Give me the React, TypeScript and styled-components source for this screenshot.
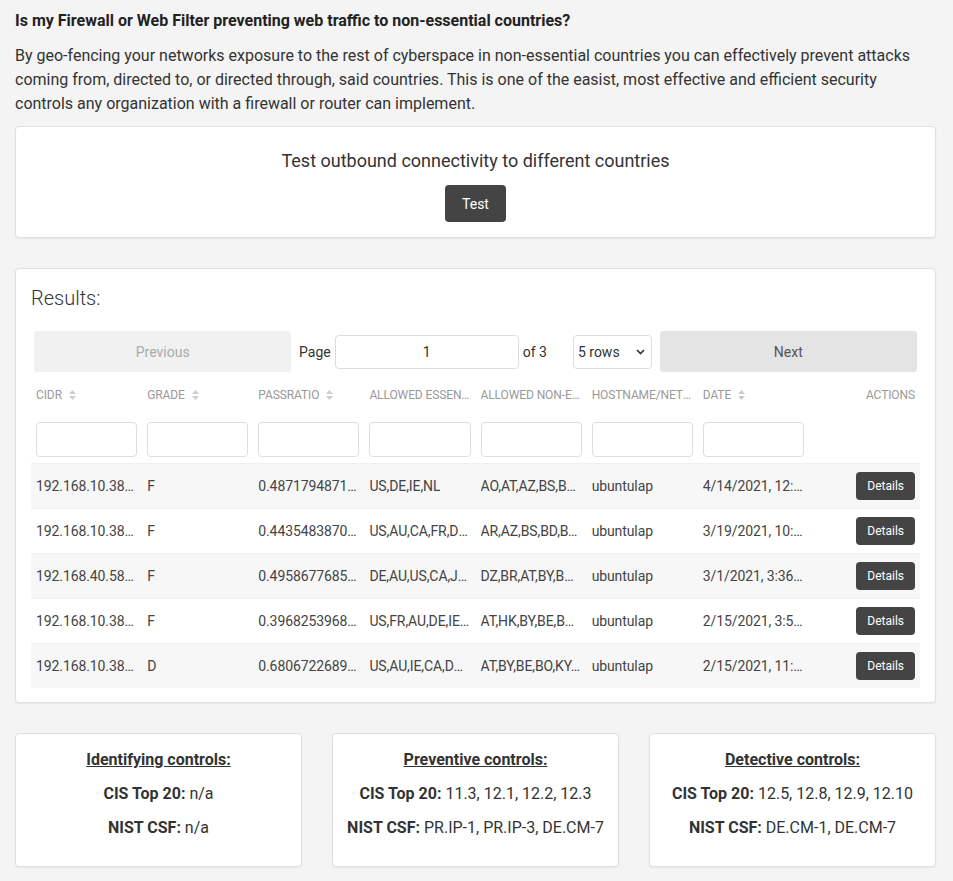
import React from 'react'
import styled, { createGlobalStyle } from 'styled-components'

const GlobalStyle = createGlobalStyle`
  body {
    margin: 0;
    background: #f4f4f4;
    font-family: Roboto, "Liberation Sans", Arial, sans-serif;
    color: #333;
  }
  * { box-sizing: border-box; }
`

const Page = styled.div`
  padding: 9px 17px 17px 15px;
`

const Question = styled.div`
  font-size: 16px;
  line-height: 24px;
  font-weight: 700;
  color: #222;
`

const Intro = styled.p`
  margin: 11px 0 10px;
  font-size: 16px;
  line-height: 24px;
  color: #333;
`

const Card = styled.div`
  background: #fff;
  border: 1px solid #e0e0e0;
  border-radius: 4px;
  box-shadow: 0 1px 2px rgba(0, 0, 0, 0.06);
`

const TestCard = styled(Card)`
  padding: 20px 15px 15px;
  text-align: center;
`

const TestHeading = styled.div`
  font-size: 18px;
  line-height: 27px;
  color: #333;
  margin-bottom: 11px;
`

const DarkButton = styled.button<{ $small?: boolean }>`
  background: #444;
  color: #fff;
  border: none;
  border-radius: 4px;
  font-family: inherit;
  font-size: ${p => (p.$small ? '12px' : '14px')};
  height: ${p => (p.$small ? '28px' : '37px')};
  padding: ${p => (p.$small ? '0 11px' : '0 17px')};
  cursor: pointer;
`

const ResultsCard = styled(Card)`
  margin-top: 30px;
  padding: 15px 15px 14px;
`

const ResultsHeading = styled.div`
  font-size: 20px;
  line-height: 28px;
  font-weight: 300;
  color: #333;
  margin-bottom: 16px;
`

const Pagination = styled.div`
  display: flex;
  align-items: center;
  padding: 3px;
`

const PageButton = styled.button<{ $disabled?: boolean }>`
  flex: 1 1 0;
  min-width: 0;
  height: 41px;
  border: none;
  border-radius: 3px;
  font-family: inherit;
  font-size: 14px;
  background: ${p => (p.$disabled ? '#f1f1f1' : '#e4e4e4')};
  color: ${p => (p.$disabled ? '#aaa' : '#555')};
`

const PageCenter = styled.div`
  flex: 1.5 1 0;
  min-width: 0;
  display: flex;
  align-items: center;
  justify-content: center;
  font-size: 14px;
  color: #333;
`

const PageInfo = styled.span`
  display: flex;
  align-items: center;
  gap: 4px;
  margin: 0 13px;
  white-space: nowrap;
`

const PageInput = styled.input`
  width: 184px;
  height: 34px;
  border: 1px solid #ddd;
  border-radius: 4px;
  text-align: center;
  font-family: inherit;
  font-size: 14px;
  color: #333;
`

const RowsSelect = styled.div`
  flex: none;
  width: 79px;
  height: 34px;
  border: 1px solid #ddd;
  border-radius: 4px;
  display: flex;
  align-items: center;
  justify-content: space-between;
  padding: 0 6px 0 4px;
  font-size: 14px;
  color: #333;
  margin: 0 13px;
`

const Grid = styled.div`
  display: grid;
  grid-template-columns: repeat(8, 1fr);
`

const HeadCell = styled.div<{ $right?: boolean }>`
  height: 40px;
  padding: 0 5px;
  display: flex;
  align-items: center;
  justify-content: ${p => (p.$right ? 'flex-end' : 'flex-start')};
  font-size: 12px;
  letter-spacing: -0.1px;
  color: #999;
  text-transform: uppercase;
  min-width: 0;
`

const HeadText = styled.span`
  white-space: nowrap;
  overflow: hidden;
  text-overflow: ellipsis;
`

const SortIcon = styled.svg`
  flex: none;
  margin-left: 7px;
`

const FilterCell = styled.div`
  height: 48px;
  padding: 0 5px;
  display: flex;
  align-items: center;
`

const FilterInput = styled.input`
  width: 100%;
  height: 35px;
  border: 1px solid #ddd;
  border-radius: 4px;
`

const Row = styled.div<{ $striped: boolean }>`
  display: contents;
  & > div {
    background: ${p => (p.$striped ? '#f7f7f7' : '#fff')};
    border-top: 1px solid #f0f0f0;
  }
`

const Cell = styled.div<{ $right?: boolean }>`
  height: 45px;
  padding: 0 5px;
  display: flex;
  align-items: center;
  justify-content: ${p => (p.$right ? 'flex-end' : 'flex-start')};
  font-size: 14px;
  letter-spacing: -0.1px;
  color: #444;
  min-width: 0;
`

const CellText = styled.span`
  white-space: nowrap;
  overflow: hidden;
  text-overflow: ellipsis;
`

const Controls = styled.div`
  margin-top: 30px;
  display: grid;
  grid-template-columns: repeat(3, 1fr);
  gap: 30px;
`

const ControlCard = styled(Card)`
  padding: 14px 10px 26px;
  text-align: center;
  font-size: 16px;
  line-height: 24px;
  color: #333;
`

const ControlTitle = styled.div`
  font-weight: 700;
  text-decoration: underline;
`

const ControlLine = styled.div`
  margin-top: 10px;
  b { font-weight: 700; }
`

const Sort = () => (
  <SortIcon width="7" height="10" viewBox="0 0 7 10">
    <path d="M3.5 0 L7 4 L0 4 Z M0 6 L7 6 L3.5 10 Z" fill="#ccc" />
  </SortIcon>
)

const columns = [
  { title: 'CIDR', sort: true },
  { title: 'Grade', sort: true },
  { title: 'Passratio', sort: true },
  { title: 'Allowed Essential', sort: false },
  { title: 'Allowed Non-Essential', sort: false },
  { title: 'Hostname/Network', sort: false },
  { title: 'Date', sort: true },
]

const rows = [
  ['192.168.10.38/24', 'F', '0.48717948717948717', 'US,DE,IE,NL', 'AO,AT,AZ,BS,BD,BY,BE', 'ubuntulap', '4/14/2021, 12:41:07 PM'],
  ['192.168.10.38/24', 'F', '0.44354838709677419', 'US,AU,CA,FR,DE,IE', 'AR,AZ,BS,BD,BY,BE', 'ubuntulap', '3/19/2021, 10:12:44 AM'],
  ['192.168.40.58/24', 'F', '0.49586776859504134', 'DE,AU,US,CA,JP,NL', 'DZ,BR,AT,BY,BW,BO', 'ubuntulap', '3/1/2021, 3:36:20 PM'],
  ['192.168.10.38/24', 'F', '0.39682539682539683', 'US,FR,AU,DE,IE,NL', 'AT,HK,BY,BE,BO,BR', 'ubuntulap', '2/15/2021, 3:58:02 PM'],
  ['192.168.10.38/24', 'D', '0.68067226890756305', 'US,AU,IE,CA,DE,NL', 'AT,BY,BE,BO,KY,CN', 'ubuntulap', '2/15/2021, 11:20:15 AM'],
]

const controls = [
  { title: 'Identifying controls:', cis: 'n/a', nist: 'n/a' },
  { title: 'Preventive controls:', cis: '11.3, 12.1, 12.2, 12.3', nist: 'PR.IP-1, PR.IP-3, DE.CM-7' },
  { title: 'Detective controls:', cis: '12.5, 12.8, 12.9, 12.10', nist: 'DE.CM-1, DE.CM-7' },
]

const App: React.FC = () => {
  return (
    <Page>
      <GlobalStyle />
      <Question>Is my Firewall or Web Filter preventing web traffic to non-essential countries?</Question>
      <Intro>
        By geo-fencing your networks exposure to the rest of cyberspace in non-essential countries you can effectively
        prevent attacks coming from, directed to, or directed through, said countries. This is one of the easist, most
        effective and efficient security controls any organization with a firewall or router can implement.
      </Intro>

      <TestCard>
        <TestHeading>Test outbound connectivity to different countries</TestHeading>
        <DarkButton>Test</DarkButton>
      </TestCard>

      <ResultsCard>
        <ResultsHeading>Results:</ResultsHeading>
        <Pagination>
          <PageButton $disabled>Previous</PageButton>
          <PageCenter>
            <PageInfo>
              Page <PageInput defaultValue="1" /> of 3
            </PageInfo>
            <RowsSelect>
              5 rows
              <svg width="9" height="6" viewBox="0 0 9 6">
                <path d="M1 1 L4.5 4.5 L8 1" stroke="#333" strokeWidth="1.6" fill="none" />
              </svg>
            </RowsSelect>
          </PageCenter>
          <PageButton>Next</PageButton>
        </Pagination>

        <Grid>
          {columns.map(c => (
            <HeadCell key={c.title}>
              <HeadText>{c.title}</HeadText>
              {c.sort && <Sort />}
            </HeadCell>
          ))}
          <HeadCell $right>
            <HeadText>Actions</HeadText>
          </HeadCell>

          {columns.map(c => (
            <FilterCell key={c.title}>
              <FilterInput />
            </FilterCell>
          ))}
          <FilterCell />

          {rows.map((r, i) => (
            <Row key={i} $striped={i % 2 === 0}>
              {r.map((v, j) => (
                <Cell key={j}>
                  <CellText>{v}</CellText>
                </Cell>
              ))}
              <Cell $right>
                <DarkButton $small>Details</DarkButton>
              </Cell>
            </Row>
          ))}
        </Grid>
      </ResultsCard>

      <Controls>
        {controls.map(c => (
          <ControlCard key={c.title}>
            <ControlTitle>{c.title}</ControlTitle>
            <ControlLine>
              <b>CIS Top 20:</b> {c.cis}
            </ControlLine>
            <ControlLine>
              <b>NIST CSF:</b> {c.nist}
            </ControlLine>
          </ControlCard>
        ))}
      </Controls>
    </Page>
  )
}

export default App
